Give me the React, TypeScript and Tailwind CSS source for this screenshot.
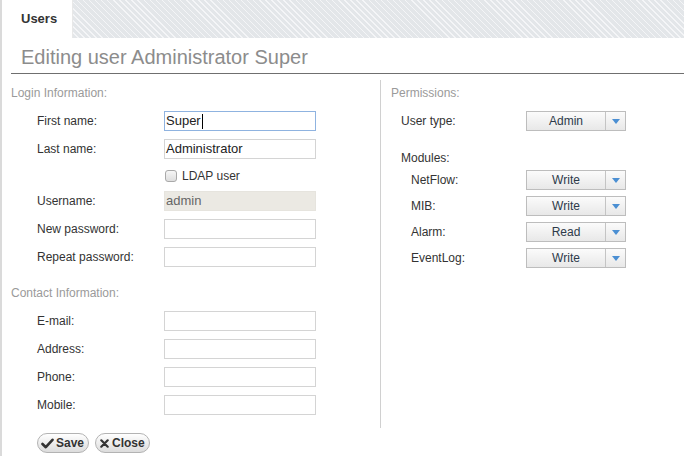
import React from "react";

const sans = "font-['Liberation_Sans',Arial,sans-serif]";

// --- Small pieces ---
function Field({ label, value, focused, disabled }: { label: string; value?: string; focused?: boolean; disabled?: boolean }) {
  return (
    <div className="mb-[8px] flex h-[20px] items-center">
      <div className="w-[153px] pl-[26px] text-[12px] text-[#333]">{label}</div>
      <div
        className={
          "flex h-[20px] w-[152px] items-center border px-[1px] text-[13px] " +
          (focused
            ? "border-[#8fb3e0] text-[#222]"
            : disabled
            ? "border-[#e6e4de] bg-[#ebe9e3] text-[#666]"
            : "border-[#d4d4d4] bg-white text-[#222]")
        }
      >
        {value}
        {focused && <span className="ml-[1px] inline-block h-[15px] w-px bg-black" />}
      </div>
    </div>
  );
}

function Select({ value }: { value: string }) {
  return (
    <div className="flex h-[20px] w-[100px] border border-[#bdbdbd] bg-linear-to-b from-[#fbfbfb] to-[#e8e8e8] text-[12px] text-[#2d3a4a]">
      <div className="flex flex-1 items-center justify-center">{value}</div>
      <div className="flex w-[20px] items-center justify-center border-l border-[#c4c4c4]">
        <svg width="8" height="5" viewBox="0 0 8 5">
          <polygon points="0,0 8,0 4,5" fill="#4b8fd3" />
        </svg>
      </div>
    </div>
  );
}

function PermRow({ label, value, indent }: { label: string; value: string; indent?: boolean }) {
  return (
    <div className="mb-[6px] flex h-[20px] items-center">
      <div className={"w-[135px] text-[12px] text-[#333] " + (indent ? "pl-[20px]" : "pl-[10px]")}>{label}</div>
      <Select value={value} />
    </div>
  );
}

export default function App() {
  return (
    <div className={"h-[456px] w-[684px] overflow-hidden border-l-2 border-[#dadada] bg-white " + sans}>
      {/* Tab bar */}
      <div className="flex h-[38px]">
        <div className="flex w-[71px] items-center pl-[19px] text-[13px] font-bold text-[#333] border-r border-[#e8e8e8]">Users</div>
        <div className="flex-1 bg-[repeating-linear-gradient(45deg,#e3e6e9_0px,#e3e6e9_3.3px,#f4f5f7_3.3px,#f4f5f7_4.3px)]" />
      </div>

      {/* Title */}
      <div className="ml-[9px] flex h-[36px] items-center border-b border-[#6f6f6f] pl-[10px] pt-[2px] text-[20px] text-[#8c8c8c]">
        Editing user Administrator Super
      </div>

      {/* Columns */}
      <div className="ml-[9px] mt-[6px] flex h-[348px]">
        <div className="w-[370px] border-r border-[#d0d0d0]">
          <div className="mt-[5px] mb-[10px] flex h-[16px] items-center text-[12px] text-[#9a9a9a]">Login Information:</div>
          <Field label="First name:" value="Super" focused />
          <Field label="Last name:" value="Administrator" />
          <div className="mb-[8px] flex h-[16px] items-center pl-[154px] pt-[2px]">
            <div className="h-[12px] w-[12px] rounded-[3px] border border-[#a9a9a9] bg-linear-to-b from-[#f6f6f6] to-[#dedede]" />
            <span className="ml-[5px] text-[12px] text-[#333]">LDAP user</span>
          </div>
          <Field label="Username:" value="admin" disabled />
          <Field label="New password:" />
          <Field label="Repeat password:" />

          <div className="mt-[18px] mb-[10px] flex h-[16px] items-center text-[12px] text-[#9a9a9a]">Contact Information:</div>
          <Field label="E-mail:" />
          <Field label="Address:" />
          <Field label="Phone:" />
          <Field label="Mobile:" />
        </div>

        <div className="flex-1 pl-[10px]">
          <div className="mt-[5px] mb-[10px] flex h-[16px] items-center text-[12px] text-[#9a9a9a]">Permissions:</div>
          <PermRow label="User type:" value="Admin" />
          <div className="mt-[19px] mb-[4px] flex h-[16px] items-center pl-[10px] text-[12px] text-[#333]">Modules:</div>
          <PermRow label="NetFlow:" value="Write" indent />
          <PermRow label="MIB:" value="Write" indent />
          <PermRow label="Alarm:" value="Read" indent />
          <PermRow label="EventLog:" value="Write" indent />
        </div>
      </div>

      {/* Actions */}
      <div className="ml-[35px] mt-[5px] flex gap-[6px]">
        <button className="flex h-[20px] items-center gap-[2px] rounded-full border border-[#b3b3b3] bg-linear-to-b from-white to-[#dcdcdc] pl-[3px] pr-[4px] text-[12px] font-bold text-[#333]">
          <svg width="13" height="11" viewBox="0 0 13 11">
            <path d="M1.5 6 L4.8 9.2 L11.5 1.8" fill="none" stroke="#333" strokeWidth="2.6" strokeLinecap="round" strokeLinejoin="round" />
          </svg>
          Save
        </button>
        <button className="flex h-[20px] items-center gap-[3px] rounded-full border border-[#b3b3b3] bg-linear-to-b from-white to-[#dcdcdc] pl-[4px] pr-[4px] text-[12px] font-bold text-[#333]">
          <svg width="9" height="9" viewBox="0 0 9 9">
            <path d="M1.3 1.3 L7.7 7.7 M7.7 1.3 L1.3 7.7" fill="none" stroke="#333" strokeWidth="2.2" strokeLinecap="round" />
          </svg>
          Close
        </button>
      </div>
    </div>
  );
}
